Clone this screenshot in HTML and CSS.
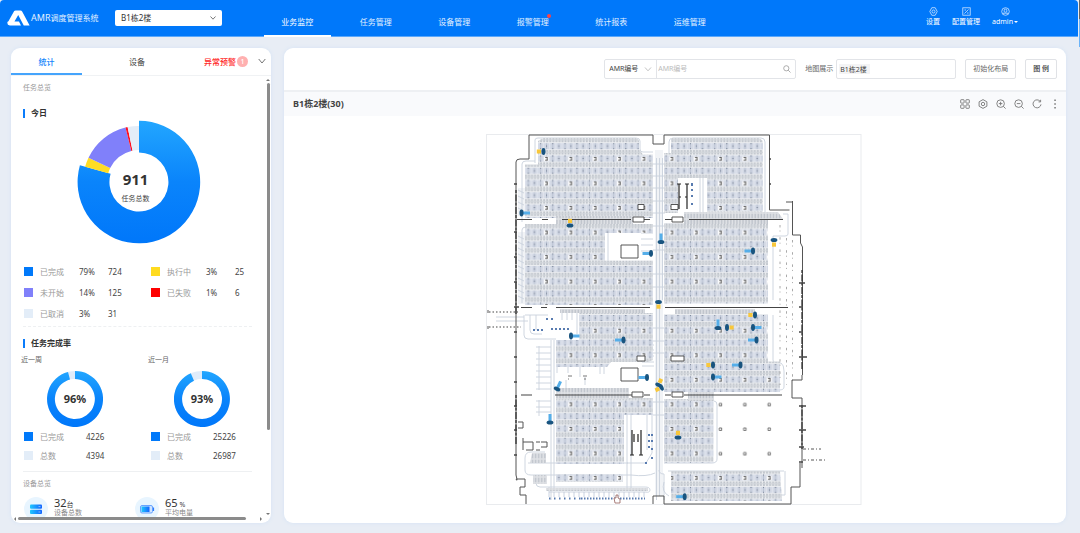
FILE: index.html
```html
<!DOCTYPE html>
<html lang="zh-CN">
<head>
<meta charset="utf-8">
<title>AMR调度管理系统</title>
<link rel="stylesheet" href="styles.css">
</head>
<body>
<header class="topbar">
  <div class="brand">
    <svg class="logo" viewBox="0 0 24 17"><path fill="#fff" fill-rule="evenodd" d="M7.500 .8 Q8 .2 9 .2 H14 Q15.200 .2 15.800 1.200 L23.600 15.800 H17.500 L11.700 4.800 L7.800 11.500 H12.500 L14.600 15.800 H3 Q.3 15.600 .3 13 Q.4 11.500 1.500 11.300 Z"/></svg>
    <span><span class="brand-en">AMR</span>调度管理系统</span>
  </div>
  <div class="site">
    <select class="site-select" aria-label="楼层"><option>B1栋2楼</option></select>
    <svg class="chev site-chev" viewBox="0 0 8 8"><path d="M1.500 2.500 4 5.200 6.500 2.500"/></svg>
  </div>
  <nav class="nav">
    <a href="#" class="active">业务监控</a>
    <a href="#">任务管理</a>
    <a href="#">设备管理</a>
    <a href="#"><span class="dotted">报警管理</span></a>
    <a href="#">统计报表</a>
    <a href="#">运维管理</a>
  </nav>
  <div class="user">
    <a href="#"><svg viewBox="0 0 9 9"><path d="M2.800 .7h3.400L8.200 4.500 6.200 8.300H2.800L.8 4.500z"/><circle cx="4.500" cy="4.500" r="1.500"/></svg>设置</a>
    <a href="#"><svg viewBox="0 0 9 9"><rect x=".8" y=".8" width="7.400" height="7.400"/><path d="M2.500 6.500 6.500 2.500M2.500 3h1.500M5 6h1.500"/></svg>配置管理</a>
    <a href="#"><svg viewBox="0 0 9 9"><circle cx="4.500" cy="4.500" r="3.800"/><rect x="3.200" y="2.200" width="2.600" height="3" rx="1"/><path d="M2.200 7V6.200h4.600V7"/></svg><span class="admin">admin</span></a>
  </div>
</header>

<main class="main">
  <aside class="card side">
    <div class="tabs">
      <button class="tab active">统计</button>
      <button class="tab">设备</button>
      <button class="tab warn">异常预警<span class="badge">1</span></button>
      <svg class="chev tab-chev" viewBox="0 0 8 8"><path d="M.7 2 4 6 7.300 2"/></svg>
    </div>
    <div class="scroller">
      <div class="content">
        <p class="caption">任务总览</p>
        <h2 class="heading today">今日</h2>
        <div class="donut">
          <svg viewBox="-62 -62 124 124">
            <defs><linearGradient id="blue" x1="0" y1="0" x2="0" y2="1"><stop offset="0" stop-color="#22a6ff"/><stop offset=".5" stop-color="#0a84fb"/><stop offset="1" stop-color="#0077fa"/></linearGradient></defs>
            <path fill="url(#blue)" d="M0-61.300A61.300 61.300 0 1 1-59.100-16.700L-28.400-8.200A29.500 29.500 0 1 0 0-29.500Z"/>
            <path fill="#ffdc24" d="M-53.900-15.200A56 56 0 0 1-50.500-24.200L-28.800-14A32 32 0 0 0-30.700-8.800Z"/>
            <path fill="#8080fa" d="M-50.500-24.200A56 56 0 0 1-13.500-54.400L-7.700-31.100A32 32 0 0 0-28.800-14Z"/>
            <path fill="#fe1020" d="M-13.500-54.400A56 56 0 0 1-11.400-54.900L-6.500-31.400A32 32 0 0 0-7.700-31.100Z"/>
            <path fill="#e3edf8" d="M-11.400-54.900A56 56 0 0 1 0-56V-32A32 32 0 0 0-6.500-31.400Z"/>
          </svg>
          <div class="donut-text"><strong>911</strong><span>任务总数</span></div>
        </div>
        <div class="legend">
          <div class="item"><i class="sw blue"></i><span class="lb">已完成</span><span>79%</span><span>724</span></div>
          <div class="item"><i class="sw yellow"></i><span class="lb">执行中</span><span>3%</span><span>25</span></div>
          <div class="item"><i class="sw purple"></i><span class="lb">未开始</span><span>14%</span><span>125</span></div>
          <div class="item"><i class="sw red"></i><span class="lb">已失败</span><span>1%</span><span>6</span></div>
          <div class="item"><i class="sw pale"></i><span class="lb">已取消</span><span>3%</span><span>31</span></div>
        </div>
        <hr class="rule dashed">
        <h2 class="heading">任务完成率</h2>
        <div class="rates">
          <section>
            <h3 class="period">近一周</h3>
            <div class="ring">
              <svg viewBox="-28 -28 56 56"><circle r="24" fill="none" stroke="#e0ecfa" stroke-width="8"/><path fill="url(#blue)" d="M0-28A28 28 0 1 1-7-27.100L-5-19.400A20 20 0 1 0 0-20Z"/></svg>
              <strong>96%</strong>
            </div>
            <div class="pair"><i class="sw blue"></i><span class="lb">已完成</span><span>4226</span></div>
            <div class="pair"><i class="sw pale"></i><span class="lb">总数</span><span>4394</span></div>
          </section>
          <section>
            <h3 class="period">近一月</h3>
            <div class="ring">
              <svg viewBox="-28 -28 56 56"><circle r="24" fill="none" stroke="#e0ecfa" stroke-width="8"/><path fill="url(#blue)" d="M0-28A28 28 0 1 1-11.200-25.700L-8-18.300A20 20 0 1 0 0-20Z"/></svg>
              <strong>93%</strong>
            </div>
            <div class="pair"><i class="sw blue"></i><span class="lb">已完成</span><span>25226</span></div>
            <div class="pair"><i class="sw pale"></i><span class="lb">总数</span><span>26987</span></div>
          </section>
        </div>
        <hr class="rule">
        <p class="caption">设备总览</p>
        <div class="devices">
          <div class="device">
            <svg viewBox="0 0 24 24"><defs><linearGradient id="ic"><stop offset="0" stop-color="#1fc8ff"/><stop offset="1" stop-color="#1463ff"/></linearGradient></defs><circle cx="12" cy="12" r="12" fill="#e8f5ff"/><rect x="6" y="7.500" width="12" height="4.300" rx="1" fill="url(#ic)"/><rect x="6" y="12.800" width="12" height="4.300" rx="1" fill="url(#ic)"/><path d="M14.500 9.600h2M14.500 15h2" stroke="#9fd0ff" stroke-width=".8"/></svg>
            <div><p><b>32</b><small>台</small></p><span>设备总数</span></div>
          </div>
          <div class="device">
            <svg viewBox="0 0 24 24"><circle cx="12" cy="12" r="12" fill="#e8f5ff"/><rect x="5.500" y="8.500" width="12" height="7.500" rx="1.500" fill="#cfe4ff" stroke="#4b93ff" stroke-width=".8"/><rect x="6.500" y="9.500" width="8" height="5.500" fill="url(#ic)"/><path d="M18.500 10.500v3.500" stroke="#2a7bff" stroke-width="1.200"/></svg>
            <div><p><b>65</b><small> %</small></p><span>平均电量</span></div>
          </div>
        </div>
      </div>
      <div class="vbar"><i class="arrow up"></i><i class="vthumb"></i><i class="arrow down"></i></div>
      <div class="hbar"><i class="arrow left"></i><i class="hthumb"></i><i class="arrow right"></i></div>
    </div>
  </aside>

  <section class="card stage">
    <form class="tools">
      <div class="search">
        <div class="kind"><select aria-label="查询条件"><option>AMR编号</option></select><svg class="chev pale-chev" viewBox="0 0 8 8"><path d="M1 2.500 4 5.800 7 2.500"/></svg></div>
        <input type="text" placeholder="AMR编号" aria-label="AMR编号">
        <svg class="lens" viewBox="0 0 8 8"><circle cx="3.300" cy="3.300" r="2.600"/><path d="M5.200 5.200 7.500 7.500"/></svg>
      </div>
      <label for="area">地图展示</label>
      <input id="area" class="area" type="text" value="B1栋2楼">
      <button type="button" class="btn">初始化布局</button>
      <button type="button" class="btn dark">图 例</button>
    </form>
    <div class="bar">
      <h1>B1栋2楼(30)</h1>
      <div class="acts">
        <button aria-label="布局"><svg viewBox="0 0 10 10"><rect x=".7" y=".7" width="3.400" height="3.400" rx=".5"/><rect x="5.900" y=".7" width="3.400" height="3.400" rx=".5"/><rect x=".7" y="5.900" width="3.400" height="3.400" rx=".5"/><rect x="5.900" y="5.900" width="3.400" height="3.400" rx=".5"/></svg></button>
        <button aria-label="设置"><svg viewBox="0 0 10 10"><path d="M5 .6 8.900 2.800V7.200L5 9.400 1.100 7.200V2.800z"/><circle cx="5" cy="5" r="1.700"/></svg></button>
        <button aria-label="放大"><svg viewBox="0 0 10 10"><circle cx="4.600" cy="4.600" r="3.800"/><path d="M7.400 7.400 9.600 9.600M2.800 4.600H6.400M4.600 2.800V6.400"/></svg></button>
        <button aria-label="缩小"><svg viewBox="0 0 10 10"><circle cx="4.600" cy="4.600" r="3.800"/><path d="M7.400 7.400 9.600 9.600M2.800 4.600H6.400"/></svg></button>
        <button aria-label="刷新"><svg viewBox="0 0 10 10"><path d="M8.200 2.400A4 4 0 1 0 9 5.400M8.600 .8V2.900H6.500"/></svg></button>
        <button aria-label="更多"><svg viewBox="0 0 10 10"><path class="dots" d="M4.300 .5h1.500v1.500H4.300zM4.300 4.200h1.500v1.500H4.300zM4.300 8h1.500v1.500H4.300z"/></svg></button>
      </div>
    </div>
    <div class="canvas">
      <svg class="map" viewBox="486 134 376 371" role="img" aria-label="楼层地图">
        <defs>
          <g id="band">
            <rect width="24.350" height="12.270" fill="#eceef1"/>
            <rect width="24.350" height="6" fill="#d3d9e5"/>
            <path d="M.3 0V6M6.400 0V6M12.500 0V6M18.600 0V6" stroke="#a9b4c6" stroke-width=".7"/>
            <path d="M3.300 0v6M9.400 0v6M15.500 0v6M21.600 0v6" stroke="#e8ecf3" stroke-width=".7"/>
            <path d="M.3 0v1M.3 5v1M6.400 2.500v1M12.500 0v1M12.500 5v1M18.600 2.500v1" stroke="#5f6b80" stroke-width=".9"/>
            <path d="M0 9.100H24.350" stroke="#c0c5cc" stroke-width="4.400" stroke-dasharray="1.900 1.140"/>
            <path d="M0 9.100H24.350" stroke="#d3d7dc" stroke-width="1"/>
          </g>
          <g id="tile"><use href="#band"/><use href="#band" y="12.270"/><rect x="3.900" y="13.400" width="4.600" height="4.600" fill="#fff"/><path d="M5 14.300h2.400M5 16.900h2.600M7 14.300v2.500" fill="none" stroke="#333" stroke-width=".8"/></g>
          <pattern id="pl" x="540.200" y="143.200" width="24.350" height="24.550" patternUnits="userSpaceOnUse"><use href="#tile"/></pattern>
          <pattern id="pr" x="665.600" y="143.200" width="24.350" height="24.550" patternUnits="userSpaceOnUse"><use href="#tile"/></pattern>
          <pattern id="marks" x="665.600" y="143.200" width="24.350" height="24.550" patternUnits="userSpaceOnUse"><path d="M5 14.700h2.400v2.500H5z" fill="none" stroke="#555" stroke-width=".8"/></pattern>
          <pattern id="lane" x="556" y="213" width="3.050" height="6" patternUnits="userSpaceOnUse"><rect width="3.050" height="6" fill="#e0e2e6"/><path d="M1 .7v4.600" stroke="#bfc4cc" stroke-width="1.500"/></pattern>
          <g id="b"><rect x="1" y="-1.500" width="7.500" height="3" fill="#55aee9"/><ellipse rx="2" ry="3.400" fill="#19547f"/></g>
          <g id="y"><rect x="2.500" y="-2" width="4.200" height="4" fill="#f8c73a"/><ellipse rx="2" ry="3.400" fill="#19547f"/></g>
        </defs>
        <rect x="486.500" y="134.500" width="374.500" height="370" fill="#fff" stroke="#e9ebee"/>
        <path d="M655 150h8v346h-8zM518 188h7v28h-7zM518 232h7v72h-7z" fill="#f1f3f6"/>

        <g fill="none" stroke="#c9d1dd" stroke-width=".9">
          <path d="M535 163V140q0-2 3-2h98q4 0 4 3v8q0 3 3 3h10M522 222v-58q0-3 4-3h9M522 303v-73q0-3 4-3M525 315h23M524 315v20q0 4 4 4h28M530 315v15q0 4 4 4h8M536 315v15M496 317h28M496 321h32"/>
          <path d="M656.500 158V500M659.500 158V496M662.500 158V300M665 158l4-4v-12q0-4 4-4h88q4 0 4 4v74M653 164h12M653 176h12M653 188h12M653 201h12M653 213h12M653 226h12M653 250h12M653 274h12M653 287h12M653 328h12M653 341h12M653 353h12M653 402h12M653 415h12"/>
          <path d="M518 190l6 3M518 196l6 3M518 202l6 3M518 208l6 3M518 236l6 3M518 242l6 3M518 248l6 3M518 254l6 3M518 260l6 3M518 266l6 3M518 272l6 3M518 278l6 3M518 284l6 3M518 290l6 3M518 296l6 3"/>
          <path d="M783 214h5v20q0 2-3 2h-12v64M773 315v45q0 3 6 3h2q3 2 3 8v16q0 3-5 3M714 401q3 0 3 4v54q0 4-5 4h-48M659 470q0 4 5 4v26M664 482q-3 10 5 14M785 471v24h-6M668 471h116"/>
          <path d="M551 340V500M554 340V490M536 347h15M536 353h15M536 359h15M536 365h15M536 371h15M536 377h15M536 383h15M536 389h15M539 346v44M536 401h15M536 407h15M536 412h15M539 400v16"/>
          <path d="M545 452h-14q-6 0-6 6v12q0 5 6 5h100q16 2 24-2M528 463h100M536 475v8q0 4 4 4h105q5 0 5 3t-5 2H549V487M627 415v75M631 415v75M629 402h22M629 412h22M652 415v38l-6 10h-19M647 415v35"/>
          <path d="M557 365v8M568 365v8M580 365v12M600 365v9M604 365v9M566 380v8M585 377v8M642 345h12M642 350h12M642 356h12M642 362h12M642 366h12M641 233h12M641 239h12M641 245h12M641 251h12M608 233v28M700 178v35M703 178v34"/>
          <path d="M562 310v10M567 310v10M572 310v10M577 310v24"/>
        </g>

        <g fill="url(#pl)">
          <path d="M543 138h92q4 0 4 4v7l4 5.500h10V218H525v-53.500h13V141zM525 224H653v9H605v27.500H653V305H525zM579 313H653v47l-5 2-37 0-4 5H556V340h23zM556 398H653v17H624v49H556zM556 474h67v8h-67z"/>
        </g>
        <g fill="url(#pr)">
          <path d="M671 138h88l4 3v77.500h-56V178h-29v35h-14V153h7zM664 223H768v80.500H664zM664 314H768v47.500h12V392H664zM664 399h49.500v64H664zM671 471H780l2 30H671z"/>
        </g>
        <g fill="url(#lane)">
          <path d="M684 212h94l5 7h-99zM556 216h77v8h-77zM556 388h73v11h-73zM688 392h26v9h-26zM684 219h84v5h-84zM532 453h14v10h-16zM533 475h14v9h-14zM546 488h102v3H546zM560 309h85v4h-85zM675 309h80v5h-80z"/>
        </g>
        <path fill="url(#marks)" d="M716 399h56v65h-56z"/>
        <g fill="#587bb0">
          <path d="M533 329h2v2h-2zM537 329h2v2h-2zM541 329h2v2h-2zM551 328h2v2h-2zM555 328h2v2h-2zM559 328h2v2h-2zM563 328h2v2h-2zM567 328h2v2h-2zM546 318h2v2h-2zM551 318h2v2h-2zM691 183h2v3h-2zM691 189h2v2h-2zM691 195h2v2h-2zM691 203h2v2h-2zM648 434h2v2h-2zM651 434h2v2h-2zM648 440h2v2h-2zM651 440h2v2h-2zM648 446h2v2h-2zM651 448h2v2h-2zM651 457h2v2h-2zM645 462h2v2h-2z"/>
        </g>
        <path d="M549 498.500h32" stroke="#587bb0" stroke-width="2" stroke-dasharray="1.500 3.500"/>
        <path d="M581 498.500h64" stroke="#587bb0" stroke-width="2" stroke-dasharray="1.500 1.500"/>
        <path d="M549 492v5M554 492v5M559 492v5M564 492v5M569 492v5M574 492v5M579 492v5M584 492v5M589 492v5M594 492v5M599 492v5M604 492v5M609 492v5M614 492v5M619 492v5M624 492v5M629 492v5M634 492v5M639 492v5M644 492v5" stroke="#bcc7d8" stroke-width=".8"/>
        <g fill="none" stroke="#aaa" stroke-width="1" stroke-dasharray="2.500 3 1 5.700"><path d="M780 225V385M786.500 238V385M792.500 240V385"/></g>

        <g fill="none" stroke="#555" stroke-width="1">
          <path d="M653 144v-9H529v24h-9q-4 0-4 3V315M653 144h11v-9H769.500v75h20M516 315v160M516 475q2 8 0 4h9v8h-5v8h6v9M653 504v-8h11v8h127V487h9v-24M792.500 201v34h8v8l2 4V375"/>
          <path d="M802 375v5h-10v18h10v70M786 202h6M518 422h5v6h-5M523 438v12M523 442h10v8h-7M536 442h4M536 450h4M541 442h6v5h-6"/>
        </g>
        <path d="M516 190V315M516 395v50M802 270v100M802 405v44" fill="none" stroke="#333" stroke-width="1.300" stroke-dasharray="3 1.500 7 1"/>
        <path d="M514 184h3M514 232h3M514 257h3M514 282h3M514 307h5M514 332h3M514 357h3M514 382h3M514 406h3M514 430h3M514 455h3M799 283h6M799 307h3M799 332h3M799 357h8M799 406h7M799 430h7M799 447h5M799 462h4M769 159h2M769 184h2" stroke="#444" stroke-width="1.500"/>
        <g stroke="#444" stroke-width="1.200" fill="none">
          <path d="M517 219.500h15M542 219.500h6M562 219.500h69M644 219.500h6M665 219.500h7M689 219.500h94M521 307.500h11M541 307.500h6M556 307.500h94M665 307.500h123M521 395h11M555 395h77M644 395h6M665 395h6M684 395h98"/>
          <path d="M489 312h29M489 327h32" stroke-dasharray="1.500 2"/><path d="M488 310v4M488 326v4M803 449h18M803 460h22" stroke-width=".9" stroke-dasharray="3 2 1 2"/>
        </g>
        <g fill="#fff" stroke="#444" stroke-width=".9">
          <path d="M633 217h11v5h-11zM672 217h11v5h-11zM638 204.500h6v5h-6zM671 204.500h7v5h-7zM621 245h17v13h-17zM637 356h8v5h-8zM671 356h13v5h-13zM621 368h17v13h-17zM632 392h11v5h-11zM672 392h11v5h-11z"/>
        </g>
        <path d="M679 184v25M687 184v25M677 184h4M685 184h4M679 197h2M685 197h2M632 430v25M641 430v25M630 455h4M639 455h4M634 434v8M638 434v8" stroke="#222" stroke-width="1.200"/>
        <path d="M568 376h4M583 376h4M568 379h1M584 379h2" stroke="#777"/>
        <path d="M616 495v3h-2l1 5h5v-4l-2-1v-3z" fill="#fff" stroke="#96605c" stroke-width=".8"/>

        <use href="#y" transform="translate(543.500 151.500) rotate(180)"/>
        <use href="#b" transform="translate(521.500 213)"/>
        <use href="#y" transform="translate(570 225.500) rotate(-90)"/>
        <use href="#b" transform="translate(661 242) rotate(-90)"/>
        <use href="#b" transform="translate(651 253.500) rotate(180)"/>
        <use href="#y" transform="translate(774 240) rotate(90)"/>
        <use href="#b" transform="translate(753 251) rotate(180)"/>
        <use href="#b" transform="translate(571 336)"/>
        <use href="#b" transform="translate(623.500 340) rotate(180)"/>
        <use href="#y" transform="translate(658.500 302) rotate(90)"/>
        <use href="#b" transform="translate(647 377.500) rotate(180)"/>
        <use href="#y" transform="translate(755 315) rotate(180)"/>
        <use href="#b" transform="translate(718 328) rotate(-90)"/>
        <use href="#y" transform="translate(727 327.500)"/>
        <use href="#b" transform="translate(753 327.500)"/>
        <use href="#b" transform="translate(756.500 340) rotate(180)"/>
        <use href="#y" transform="translate(713 365) rotate(180)"/>
        <use href="#b" transform="translate(740.500 365) rotate(180)"/>
        <use href="#b" transform="translate(713 377)"/>
        <use href="#b" transform="translate(557 389) rotate(-65)"/>
        <use href="#b" transform="translate(550 422.500) rotate(-90)"/>
        <use href="#y" transform="translate(658.500 385) rotate(-65)"/>
        <use href="#y" transform="translate(661.500 387.500) rotate(155)"/>
        <use href="#y" transform="translate(678 437.500) rotate(-90)"/>
        <use href="#b" transform="translate(684.700 496.700) rotate(180)"/>
      </svg>
    </div>
  </section>
</main>
</body>
</html>
```
FILE: styles.css
```css
* { box-sizing: border-box; margin: 0; padding: 0; }
body {
  min-height: 100vh;
  display: flex;
  flex-direction: column;
  background: #e8edf5;
  padding-right: 2px;
  color: #444;
  font: 8px/12px "Noto Sans", "Noto Sans CJK SC", sans-serif;
}
body::after {
  content: "";
  position: absolute;
  top: 0;
  right: 0;
  width: 1px;
  height: 47px;
  background: linear-gradient(#666 19px, #6cb4f8 19px);
}
button, input, select { font: inherit; color: inherit; border: 0; background: none; outline: 0; appearance: none; }
a { color: inherit; text-decoration: none; }
.chev { width: 8px; height: 8px; fill: none; stroke: #666; stroke-width: 0.9; }

/* top bar */
.topbar {
  height: 37px;
  flex: none;
  display: flex;
  background: #0078fa;
  border-bottom: 1px solid #5ba8fb;
  border-radius: 4px 4px 0 0;
  color: #e4f1ff;
}
.brand { width: 115px; padding-left: 7px; display: flex; align-items: center; gap: 1px; white-space: nowrap; }
.logo { width: 23px; height: 17px; flex: none; }
.brand-en { font-size: 9px; }
.site { position: relative; width: 107px; align-self: center; }
.site-select { width: 100%; height: 16px; display: block; padding: 0 6px; border-radius: 2px; background: #fff; color: #333; }
.site-chev { position: absolute; right: 5px; top: 4px; }
.nav { width: 471px; margin-left: 36px; display: flex; }
.nav a { flex: 1; margin: 0 6px; padding-top: 16px; height: 37px; text-align: center; border-bottom: 2px solid transparent; }
.nav .active { border-color: #fff; color: #fff; }
.dotted { position: relative; }
.dotted::after { content: ""; position: absolute; right: -2px; top: -2px; width: 4px; height: 4px; border-radius: 50%; background: #ff4242; }
.user { margin: 7px 60px 0 auto; display: flex; gap: 12px; font-size: 7px; line-height: 10px; }
.user a { display: flex; flex-direction: column; align-items: center; gap: 1px; color: #fff; }
.user svg { width: 9px; height: 9px; fill: none; stroke: #cfe5ff; stroke-width: 0.8; }
.admin::after { content: ""; display: inline-block; margin-left: 1px; vertical-align: 1px; border: 2px solid transparent; border-top-color: #fff; border-bottom: 0; }

/* frame */
.main { flex: 1; display: flex; gap: 13px; padding: 11px 12px 10px 11px; }
.card { background: #fff; border-radius: 9px; box-shadow: 0 0 4px #d5e3f5; overflow: hidden; }
.side { width: 260px; flex: none; display: flex; flex-direction: column; }
.stage { flex: 1; min-width: 0; display: flex; flex-direction: column; }

/* side tabs */
.tabs { height: 28px; flex: none; display: flex; border-bottom: 1px solid #f0f2f4; }
.tab { width: 71px; padding-top: 2px; border-bottom: 2px solid transparent; }
.tab:nth-child(2) { width: 110px; }
.tab.active { color: #1184fb; border-color: #45a4fc; font-weight: 500; }
.tab.warn { width: 60px; margin-left: 12px; display: flex; align-items: center; gap: 1px; color: #ff2626; font-weight: 500; white-space: nowrap; }
.badge { width: 11px; height: 11px; border-radius: 50%; background: #ffb0b0; color: #fff; font-size: 7px; line-height: 11px; text-align: center; }
.tab-chev { margin: 9px 0 0 -6px; }

/* side content */
.scroller { flex: 1; min-height: 0; display: grid; grid-template: 1fr 6px / 1fr 5px; }
.content { padding: 7px 14px 0 12px; overflow: hidden; height: 441px; }
.caption { font-size: 7px; line-height: 10px; color: #999; }
.heading { display: flex; align-items: center; gap: 6px; font-size: 8px; line-height: 12px; color: #333; }
.heading::before { content: ""; width: 2px; height: 9px; background: #0a7cfb; }
.today { margin-top: 14px; }
.donut { position: relative; width: 124px; margin: 1px auto 0 54px; height: 124px; }
.donut svg { display: block; }
.donut-text { position: absolute; inset: 50px 0 0; text-align: center; padding-right: 7px; font-size: 7px; line-height: 10px; }
.donut-text strong { display: block; font-size: 15px; line-height: 18px; margin-bottom: 6px; color: #333; }
.legend { display: grid; grid-template-columns: 127px 1fr; padding: 17px 0 0 1px; }
.item { display: grid; grid-template-columns: 16px 39px 29px 1fr; align-items: center; height: 21px; }
.sw { width: 9px; height: 9px; }
.lb { color: #999; }
.blue { background: #0079fa; }
.yellow { background: #ffdb20; }
.purple { background: #8080fa; }
.red { background: #fe0000; }
.pale { background: #e3edf8; }
.rule { border: 0; border-top: 1px solid #eef0f2; margin: 2px 0 10px; }
.dashed { border-top-style: dashed; }
.rates { display: grid; grid-template-columns: 127px 1fr; margin-top: 6px; }
.period { margin-left: -2px; font-weight: 400; font-size: 7px; line-height: 10px; color: #666; }
.ring { width: 56px; height: 56px; margin: 6px 0 0 24px; display: grid; place-items: center; }
.ring > * { grid-area: 1 / 1; }
.ring svg { width: 56px; height: 56px; }
.ring strong { font-size: 11px; color: #333; }
.pair { display: grid; grid-template-columns: 16px 46px 1fr; align-items: center; height: 19px; padding-left: 1px; }
.rates + .rule { margin: 6px 0 7px; }
.devices { display: grid; grid-template-columns: 111px 1fr; margin-top: 8px; padding-left: 1px; }
.device { display: flex; gap: 6px; white-space: pre; }
.device svg { width: 24px; height: 24px; }
.device p { display: flex; align-items: baseline; height: 11px; line-height: 12px; }
.device b { font-size: 11px; font-weight: 400; color: #333; }
.device small { font-size: 7px; }
.device span { display: block; font-size: 7px; line-height: 9px; color: #888; }

/* scroll bars */
.vbar { display: flex; flex-direction: column; align-items: center; padding: 3px 1px 2px 0; gap: 2px; }
.vthumb { width: 3px; height: 347px; margin-bottom: auto; background: #8b8b8b; border-radius: 2px; }
.hbar { grid-column: 1; display: flex; align-items: center; padding: 0 4px 3px 3px; gap: 2px; }
.hthumb { width: 228px; height: 3px; margin-right: auto; background: #8b8b8b; border-radius: 2px; }
.arrow { border: 2px solid transparent; flex: none; }
.up { border-top: 0; border-bottom-color: #777; }
.down { border-bottom: 0; border-top-color: #777; }
.left { border-left: 0; border-right-color: #777; }
.right { border-right: 0; border-left-color: #777; }

/* map tools */
.tools { flex: none; height: 44px; padding: 0 9px; display: flex; align-items: center; justify-content: flex-end; border-bottom: 2px solid #eef0f3; font-size: 7px; }
.search { width: 192px; height: 20px; display: flex; align-items: center; border: 1px solid #e2e4e8; border-radius: 2px; padding-right: 4px; }
.kind { width: 52px; height: 18px; display: flex; align-items: center; border-right: 1px solid #e2e4e8; }
.kind select { width: 39px; padding-left: 4px; }
.search input { flex: 1; min-width: 0; padding-left: 1px; }
.search input::placeholder { color: #bbb; }
.pale-chev { stroke: #bbb; }
.lens { width: 8px; height: 8px; fill: none; stroke: #999; stroke-width: 0.8; }
.tools label { margin: 0 3px 0 9px; color: #666; }
.area { width: 120px; height: 20px; border: 1px solid #e2e4e8; border-radius: 2px; padding: 0 3px; background: linear-gradient(#f4f4f5, #f4f4f5) 2px 4px / 31px 10px no-repeat; }
.btn { margin-left: 9px; height: 20px; padding: 0 7px; border: 1px solid #e0e2e6; border-radius: 2px; color: #666; }
.dark { color: #333; font-weight: 500; }
.bar { flex: none; height: 24px; padding: 0 6px 0 9px; display: flex; align-items: center; justify-content: space-between; background: #f9fafc; }
.bar h1 { font-size: 9px; line-height: 12px; color: #444; }
.acts { display: flex; gap: 8px; }
.acts svg { width: 10px; height: 10px; display: block; fill: none; stroke: #777; stroke-width: 0.9; }
.acts .dots { fill: #777; stroke: none; }
.canvas { flex: 1; padding: 18px 3px 17px 0; display: flex; justify-content: center; align-items: flex-start; }
.map { width: 48%; min-width: 376px; display: block; }
```
